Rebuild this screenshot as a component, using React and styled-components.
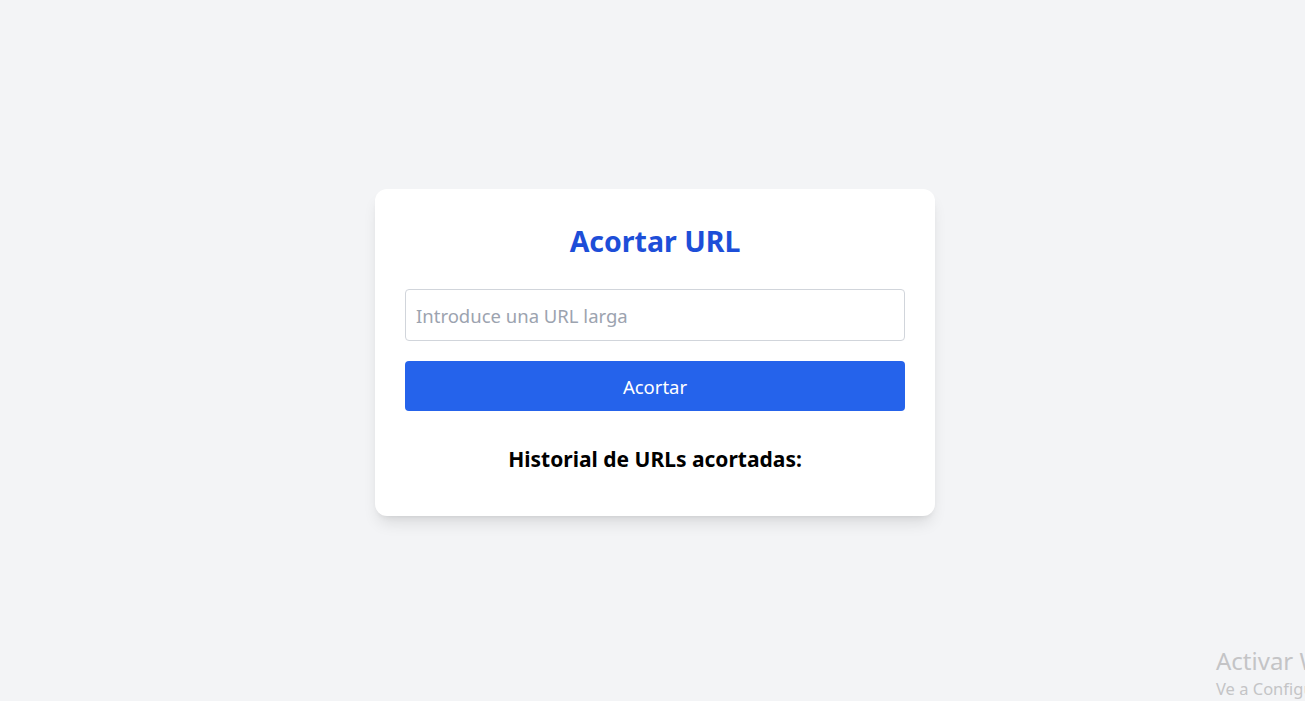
import React from "react";
import styled, { createGlobalStyle } from "styled-components";

const Global = createGlobalStyle`
  html, body { margin: 0; padding: 0; overflow: hidden; }
  body { background: #f3f4f6; font-family: "Noto Sans", "Open Sans", sans-serif; }
  * { box-sizing: border-box; }
`;

const Page = styled.div`
  min-height: 701px;
  display: flex;
  align-items: center;
  justify-content: center;
  padding: 4px 0 0 5px;
  position: relative;
`;

const Card = styled.div`
  width: 560px;
  background: #fff;
  border-radius: 12px;
  padding: 34px 30px 43px;
  box-shadow: 0 10px 15px -3px rgba(0,0,0,0.1), 0 4px 6px -4px rgba(0,0,0,0.1);
  display: flex;
  flex-direction: column;
`;

const Title = styled.h1`
  margin: 0 0 30px;
  font-size: 28.5px;
  line-height: 36px;
  font-weight: 700;
  color: #1d4ed8;
  text-align: center;
`;

const Input = styled.input`
  height: 52px;
  width: 100%;
  border: 1px solid #d1d5db;
  border-radius: 4px;
  padding: 0 10px;
  font-family: inherit;
  font-size: 18.5px;
  color: #111827;
  outline: none;
  &::placeholder { color: #9ca3af; }
`;

const Button = styled.button`
  margin-top: 20px;
  height: 50px;
  width: 100%;
  border: none;
  border-radius: 4px;
  background: #2563eb;
  color: #fff;
  font-family: inherit;
  font-size: 18.5px;
  cursor: pointer;
`;

const Subtitle = styled.h2`
  margin: 34px 0 0;
  font-size: 21px;
  line-height: 28px;
  font-weight: 700;
  color: #000;
  text-align: center;
`;

const Watermark = styled.div`
  position: absolute;
  left: 1216px;
  top: 647px;
  white-space: nowrap;
  color: #c4c4c6;
  line-height: 1.2;
`;

const WmBig = styled.div`
  font-size: 24px;
`;

const WmSmall = styled.div`
  font-size: 16.5px;
  margin-top: 3px;
`;

export default function App() {
  return (
    <>
      <Global />
      <Page>
        <Card>
          <Title>Acortar URL</Title>
          <Input placeholder="Introduce una URL larga" />
          <Button>Acortar</Button>
          <Subtitle>Historial de URLs acortadas:</Subtitle>
        </Card>
        <Watermark>
          <WmBig>Activar Windows</WmBig>
          <WmSmall>Ve a Configuración para activar Windows.</WmSmall>
        </Watermark>
      </Page>
    </>
  );
}
